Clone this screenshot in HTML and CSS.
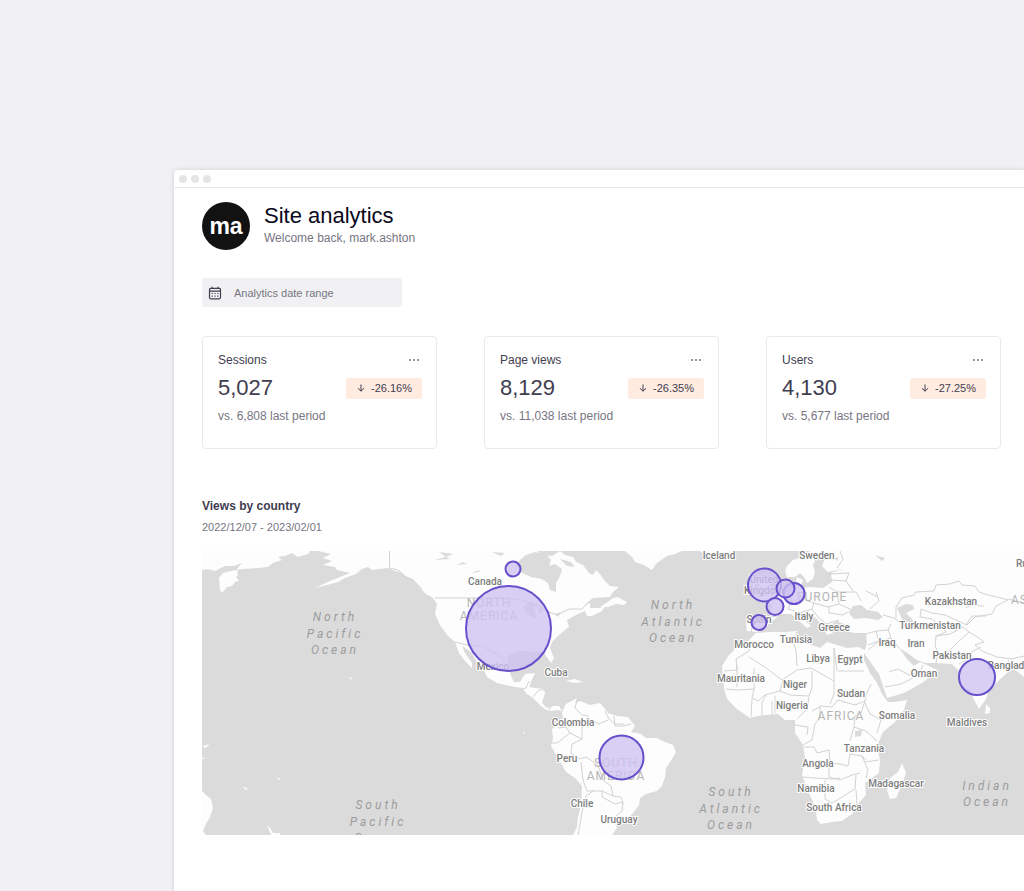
FILE: index.html
```html
<!DOCTYPE html>
<html lang="en">
<head>
<meta charset="utf-8">
<meta name="viewport" content="width=device-width, initial-scale=1">
<title>Site analytics</title>
<link rel="stylesheet" href="styles.css">
</head>
<body>
<div class="window">
  <div class="titlebar"><span class="dot"></span><span class="dot"></span><span class="dot"></span></div>
  <main class="content">
    <header class="profile">
      <div class="avatar">ma</div>
      <div>
        <h1 class="title">Site analytics</h1>
        <p class="welcome">Welcome back, mark.ashton</p>
      </div>
    </header>

    <label class="date-field">
      <svg class="calendar" viewBox="0 0 14 14" aria-hidden="true">
        <rect x="1.500" y="2.300" width="11" height="10.500" rx="1.200" fill="none" stroke="#3f3d50" stroke-width="1.200"/>
        <path d="M1.500 5.200h11M4 .8v2M10 .8v2" fill="none" stroke="#3f3d50" stroke-width="1.200"/>
        <path d="M3.600 7.500h7M3.600 10.200h7" fill="none" stroke="#3f3d50" stroke-width="1.200" stroke-dasharray="1.200 1.600"/>
      </svg>
      <input class="date-input" type="text" placeholder="Analytics date range" aria-label="Analytics date range">
    </label>

    <section class="cards">
      <article class="card">
        <div class="row"><h2 class="card-name">Sessions</h2><button class="more" type="button" aria-label="Sessions options"><i></i><i></i><i></i></button></div>
        <div class="row value-row"><span class="value">5,027</span><span class="badge"><svg class="arrow" viewBox="0 0 8 8" aria-hidden="true"><path d="M4 .5v6.600M.9 4.200 4 7.200l3.100-3"/></svg>-26.16%</span></div>
        <p class="compare">vs. 6,808 last period</p>
      </article>
      <article class="card">
        <div class="row"><h2 class="card-name">Page views</h2><button class="more" type="button" aria-label="Page views options"><i></i><i></i><i></i></button></div>
        <div class="row value-row"><span class="value">8,129</span><span class="badge"><svg class="arrow" viewBox="0 0 8 8" aria-hidden="true"><path d="M4 .5v6.600M.9 4.200 4 7.200l3.100-3"/></svg>-26.35%</span></div>
        <p class="compare">vs. 11,038 last period</p>
      </article>
      <article class="card">
        <div class="row"><h2 class="card-name">Users</h2><button class="more" type="button" aria-label="Users options"><i></i><i></i><i></i></button></div>
        <div class="row value-row"><span class="value">4,130</span><span class="badge"><svg class="arrow" viewBox="0 0 8 8" aria-hidden="true"><path d="M4 .5v6.600M.9 4.200 4 7.200l3.100-3"/></svg>-27.25%</span></div>
        <p class="compare">vs. 5,677 last period</p>
      </article>
    </section>

    <section class="countries">
      <h2 class="section-title">Views by country</h2>
      <p class="range">2022/12/07 - 2023/02/01</p>
      <svg class="map" viewBox="202 551 822 284" role="img" aria-label="World map of views by country">
        <rect class="sea" x="202" y="551" width="822" height="284"/>
        <g class="land">
          <path d="M202 551H310L308 554 298 557 292 553 285 556 278 557 282 560 273 563 268 567 258 568 242 569 231 571 223 573 219 578 220 590 222 593 227 587 232 586 235 582 239 581 236 577 238 575 237 569 242 563 234 566 225 566 215 571 208 569 202 570Z"/>
          <path d="M318 551H560L565 555 573 557 576 562 583 565 589 573 593 575 596 570 600 574 604 580 610 586 619 587 612 593 610 597 593 598 584 605 590 603 590 608 600 608 606 605 602 611 592 616 587 616 585 611 578 614 567 620 569 627 560 634 552 642 550 648 554 658 551 663 546 656 543 651 533 652 526 651 517 651 508 656 507 663 511 676 514 682 520 682 525 674 535 673 531 682 529 687 535 688 544 689 545 693 542 703 547 708 553 706 559 706 562 711 558 710 551 711 546 710 541 706 533 698 527 694 522 688 510 686 497 683 487 677 484 670 477 662 471 652 462 646 465 653 472 663 472 668 465 661 459 653 455 642 447 635 440 625 435 614 437 604 433 598 426 594 419 587 413 579 405 576 400 572 395 571 388 568 380 569 372 570 368 567 362 569 356 574 345 578 338 582 327 585 315 588 330 581 345 575 350 573 337 570 335 567 323 565 332 561 323 558 331 554Z"/>
          <path d="M625 551H682L675 554 667 556 660 561 656 564 652 570 644 565 635 562 632 557Z"/>
          <path d="M600 607 609 601 613 598 618 597 623 600 627 602 624 605 616 604 608 607Z"/>
          <path d="M700 551H735L728 555 718 557 706 555Z"/>
          <path d="M562 712 566 704 577 698 575 703 580 701 590 705 600 703 605 709 608 713 617 716 628 717 635 726 631 732 641 734 646 738 657 738 665 742 673 745 676 752 672 759 666 768 665 777 662 786 657 791 646 794 640 798 639 805 633 813 628 818 614 820 617 828 612 835H573L577 827 578 817 581 806 582 786 575 778 566 772 561 763 555 753 551 746 553 738 552 729 558 724 563 718Z"/>
          <path d="M543 670 552 671 560 676 552 675ZM566 681 575 679 583 682 574 683Z"/>
          <path d="M753 596 760 594 759 585 764 575 769 584 776 592 775 599 766 602 758 601ZM749 585 755 584 755 592 748 594Z"/>
          <path d="M810 551 803 557 793 560 787 566 785 571 787 577 795 577 800 573 804 577 807 583 813 579 815 572 813 564 819 558 826 552 831 553 824 561 822 566 828 572 842 569 831 573 832 582 823 588 810 587 800 588 803 580 797 577 795 588 786 592 777 597 768 601 772 606 770 617 759 617 748 616 746 625 747 631 757 632 765 628 772 621 782 614 791 614 798 620 807 628 811 626 803 619 800 614 808 612 818 620 823 627 827 635 833 633 829 626 837 621 846 625 846 631 855 633 866 633 867 643 865 650 858 647 847 648 837 645 827 642 820 648 809 644 798 642 798 635 797 631 786 632 770 632 756 633 748 641 738 646 729 655 722 666 724 688 727 699 737 709 750 718 758 716 766 715 778 714 785 720 795 720 795 733 803 745 805 757 802 775 807 789 815 806 817 820 821 824 832 822 842 821 852 814 857 805 866 795 865 783 879 773 880 760 877 746 883 732 895 722 904 710 907 700 895 702 888 702 882 694 877 683 870 673 864 660 864 653 869 660 879 674 885 692 887 698 904 693 922 683 931 676 939 671 931 667 920 662 914 666 907 659 899 648 906 652 917 660 925 663 936 663 952 664 959 671 961 685 970 690 973 698 979 709 986 699 989 689 995 684 1007 673 1014 669 1024 677V551Z"/>
          <path d="M902 763 906 773 901 787 896 798 890 799 887 791 890 778 898 772ZM986 704 990 708 990 713 985 714Z"/>
          <path d="M202 791 206 795 211 799 213 808 210 817 206 824 203 831 206 835H202ZM267 825 270 828 273 833 280 833 280 835H271ZM202 746 207 745 210 743 206 748ZM242 786 248 789 246 790ZM277 778 280 778 279 780ZM202 757 205 759 202 759ZM349 677 352 678 351 680ZM523 732 525 732 525 734Z"/>
        </g>
        <g class="sea">
          <path d="M521 559 526 555 535 552 546 554 551 560 549 566 555 564 562 569 560 576 556 583 556 592 550 590 548 583 542 579 531 577 522 573 516 565Z"/>
          <path d="M560 559 571 562 575 567 567 566ZM492 552 505 553 501 556ZM439 552 453 554 446 557ZM434 560 446 557 450 559ZM456 565 463 562 467 564ZM470 573 480 570 479 572ZM537 551H560L552 556 543 555ZM523 607 531 602 538 604 534 608 536 618 532 618ZM537 609 543 608 541 614ZM555 614 561 612 558 617Z"/>
          <path d="M853 606 861 605 867 610 878 612 883 617 878 620 866 618 854 619 849 613ZM897 608 906 604 913 605 914 609 906 613 912 619 916 627 909 629 903 626 902 619ZM855 731 862 730 861 736 855 737ZM875 555 885 558 882 561ZM834 559 838 557 838 561Z"/>
        </g>
        <g class="borders">
          <path d="M389.500 551V568L398 570 406 577 413 580 422 589M435 598H508L522 600 535 604 547 611 557 615 569 609 582 609 587 604M455 642 467 645 482 646 491 651 500 655 507 663M520 690 526 688 529 681M533 697 539 690 545 690M549 710 551 706"/>
          <path d="M577 700 575 708 582 715 588 716 588 724 582 727 582 739 570 733 557 743 552 743M570 733 566 727 558 728M582 739 572 744 571 753 580 759 586 757 598 765 603 780 611 786 613 796 602 791 593 791 587 791 583 780 581 762M605 711 609 719 615 724 624 724M614 716 615 726 623 726 631 724M588 718 599 724 608 720M593 791 586 796 582 812 580 824 578 835M602 791 602 797 615 804 623 802 622 811 615 817M613 796 621 797 623 804"/>
          <path d="M749 641 749 651 736 659 737 670 724 671M749 657 766 668 782 680 797 670 811 668 834 681V648M797 632 793 642 796 650 797 666M783 680 780 691 765 695 758 701 752 698 754 689 737 690 726 689M737 665V687M754 668V690M766 695 762 702 762 716M752 699 751 717M772 701V715M775 696V713M780 691 790 695 809 696 812 688 812 671M809 697 807 709 797 719M812 711 821 706 832 707 838 700 855 705 865 701M834 681V694L830 704M838 671H864M834 648 837 671M865 701 861 713 855 716 854 727 850 741M820 707 820 718 815 724 812 740 803 745M795 725 808 727 807 735M804 747 814 747 817 753 829 750 830 763 840 764 848 766 850 754 862 756 866 760M854 727 866 731 877 741M829 764V777L840 780 852 775 860 773M802 777 815 778 832 779 840 778M825 780 825 799 832 803 842 797 850 792 855 789 856 775M856 790 857 804 850 811 845 812M862 756 868 770 866 778M865 762 879 760M864 701 870 714 881 720 894 716M871 684 866 695 865 701M881 720 877 733"/>
          <path d="M746 617 754 621 751 632M770 617 785 615M784 592 792 600 788 609 800 613 812 609 814 603 805 600 804 590M814 603 828 607 839 604 837 592 829 587M829 606 829 613 843 615 849 611M812 609 818 617 826 624 839 620M839 604 852 610M837 592 856 592 861 601M831 580 846 581 853 591M829 574 849 573 846 581M837 568 843 559 840 551M816 562 811 554M876 592 879 601 870 609M866 591 878 597M883 615 894 618 900 622M866 634 876 631 888 630 891 624M868 650 879 641 891 638 899 648M876 631 879 641 868 645M891 638 888 629M896 618 896 607 902 598 914 595 916 592 934 591 936 585 950 584 959 581 962 585 975 586 979 592 988 595 1001 598 1008 600 996 606 992 614 975 617 967 625 958 621 945 615 932 613 921 609 920 618M921 617 932 619 939 625 946 632 936 636 935 646 938 652 936 663M936 636 950 634 963 627 969 632 957 643 947 653 937 654M969 632 979 638 984 642 975 645 982 651 997 657 1012 659 1024 656M959 664 968 659 973 651 981 647M966 625 972 616 986 616M1008 660 1012 670 1020 664M966 608 971 605 984 606M889 672 898 669 909 675 920 672 923 665M885 687 901 684 909 680 920 674M1008 599 1024 603"/>
        </g>
        <g class="country">
          <text x="485" y="585">Canada</text><text x="493" y="670">Mexico</text><text x="556" y="676">Cuba</text>
          <text x="719" y="559">Iceland</text><text x="817" y="559">Sweden</text><text x="764" y="583">United</text><text x="764" y="594">Kingdom</text>
          <text x="759" y="623">Spain</text><text x="804" y="620">Italy</text><text x="834" y="631">Greece</text><text x="754" y="648">Morocco</text>
          <text x="796" y="643">Tunisia</text><text x="818" y="662">Libya</text><text x="850" y="663">Egypt</text><text x="741" y="682">Mauritania</text>
          <text x="795" y="688">Niger</text><text x="851" y="697">Sudan</text><text x="792" y="709">Nigeria</text><text x="897" y="719">Somalia</text>
          <text x="864" y="752">Tanzania</text><text x="818" y="767">Angola</text><text x="816" y="792">Namibia</text><text x="834" y="811">South Africa</text>
          <text x="896" y="787">Madagascar</text><text x="967" y="726">Maldives</text><text x="924" y="677">Oman</text><text x="952" y="659">Pakistan</text>
          <text x="887" y="646">Iraq</text><text x="916" y="647">Iran</text><text x="930" y="629">Turkmenistan</text><text x="951" y="605">Kazakhstan</text>
          <text x="1014" y="669">Bangladesh</text><text x="1031" y="567">Russia</text><text x="573" y="726">Colombia</text><text x="567" y="762">Peru</text>
          <text x="582" y="807">Chile</text><text x="619" y="823">Uruguay</text>
        </g>
        <g class="continent">
          <text x="489" y="607">NORTH</text><text x="489" y="620">AMERICA</text><text x="616" y="767">SOUTH</text><text x="616" y="780">AMERICA</text>
          <text x="822" y="601">EUROPE</text><text x="841" y="720">AFRICA</text><text x="1026" y="604">ASIA</text>
        </g>
        <g class="ocean">
          <text x="335" y="621">North</text><text x="335" y="638">Pacific</text><text x="335" y="654">Ocean</text>
          <text x="673" y="609">North</text><text x="673" y="626">Atlantic</text><text x="673" y="642">Ocean</text>
          <text x="378" y="809">South</text><text x="378" y="826">Pacific</text><text x="378" y="842">Ocean</text>
          <text x="731" y="796">South</text><text x="731" y="813">Atlantic</text><text x="731" y="829">Ocean</text>
          <text x="987" y="790">Indian</text><text x="987" y="806">Ocean</text>
        </g>
        <g class="bubbles">
          <circle cx="513" cy="569" r="7.500"/><circle cx="508.500" cy="628.500" r="42.500"/><circle cx="621.500" cy="757.500" r="22"/>
          <circle cx="764.500" cy="585" r="16.500"/><circle cx="794" cy="593.500" r="10.500"/><circle cx="785.500" cy="588.500" r="9"/>
          <circle cx="775" cy="606.500" r="8.500"/><circle cx="759" cy="622.500" r="7.500"/><circle cx="977" cy="677" r="18"/>
        </g>
      </svg>
    </section>
  </main>
</div>
</body>
</html>
```
FILE: styles.css
```css
* { box-sizing: border-box; }
body {
  margin: 0;
  min-height: 100vh;
  padding: 170px 0 0 174px;
  background: #f1f1f4;
  color: #3f3d50;
  font-family: "Liberation Sans", Arial, sans-serif;
  font-size: 12px;
  overflow-x: hidden;
}
h1, h2, p { margin: 0; font-weight: 400; }
.window {
  min-height: calc(100vh - 170px);
  background: #fff;
  border-radius: 4px 0 0 0;
  box-shadow: 0 0 5px rgba(40, 40, 60, 0.16);
}
.titlebar {
  display: flex;
  align-items: center;
  gap: 4px;
  height: 18px;
  padding-left: 5px;
  border-bottom: 1px solid #e9e9ec;
}
.dot { width: 8px; height: 8px; border-radius: 50%; background: #e5e5e8; }
.content { padding: 14px 0 56px 28px; }
.profile { display: flex; gap: 14px; }
.avatar {
  display: flex;
  align-items: center;
  justify-content: center;
  width: 48px;
  height: 48px;
  border-radius: 50%;
  background: #121212;
  color: #fff;
  font-size: 23px;
  font-weight: 700;
}
.title { color: #0b0920; font-size: 22px; line-height: 27px; }
.welcome { color: #777582; font-size: 12px; line-height: 18px; }
.date-field {
  display: flex;
  align-items: center;
  gap: 12px;
  width: 200px;
  height: 29px;
  margin-top: 28px;
  padding: 0 6px;
  border-radius: 3px;
  background: #f1f1f4;
}
.calendar { flex: none; width: 14px; height: 14px; }
.date-input {
  flex: 1;
  min-width: 0;
  padding: 0;
  border: 0;
  background: none;
  color: #3f3d50;
  font: 11px "Liberation Sans", Arial, sans-serif;
}
.date-input::placeholder { color: #777582; opacity: 1; }
.cards {
  display: grid;
  grid-template-columns: repeat(3, 1fr);
  gap: 47px;
  margin-top: 29px;
  padding-right: 23px;
}
.card {
  padding: 14px 14px 23px 15px;
  border: 1px solid #e9e9ec;
  border-radius: 4px;
}
.row { display: flex; align-items: center; justify-content: space-between; }
.card-name { font-size: 12px; line-height: 18px; }
.more { display: flex; gap: 2px; padding: 2px; margin-right: 1px; border: 0; background: none; }
.more i { width: 2px; height: 2px; border-radius: 50%; background: #777582; }
.value-row { margin-top: 6px; }
.value { font-size: 22px; line-height: 26px; }
.badge {
  display: flex;
  align-items: center;
  gap: 6px;
  height: 21px;
  padding: 0 10px 0 11px;
  border-radius: 3px;
  background: #ffebe0;
  font-size: 11px;
}
.arrow { width: 8px; height: 8px; fill: none; stroke: #3f3d50; stroke-width: 1; }
.compare { margin-top: 6px; color: #777582; font-size: 12px; line-height: 18px; }
.countries { margin-top: 48px; }
.section-title { font-size: 12px; font-weight: 700; line-height: 18px; }
.range { margin-top: 3px; color: #777582; font-size: 11px; line-height: 18px; }
.map {
  display: block;
  width: 100%;
  margin-top: 15px;
  overflow: hidden;
  font-family: Roboto, sans-serif;
  text-anchor: middle;
}
.sea { fill: #dbdbdb; }
.land { fill: #fdfdfd; }
.borders { fill: none; stroke: #d2d2d2; stroke-width: 1; stroke-linejoin: round; }
.country { fill: #7c7c7c; font-size: 10px; font-weight: 500; stroke: #fff; stroke-width: 2px; stroke-linejoin: round; paint-order: stroke; }
.continent { fill: #b5b5b5; font-size: 12px; letter-spacing: 1px; }
.ocean { fill: #9b9b9b; font-size: 12px; font-style: italic; letter-spacing: 3px; }
.bubbles { fill: rgba(206, 194, 242, 0.78); stroke: #6650cb; stroke-width: 2; }
```
